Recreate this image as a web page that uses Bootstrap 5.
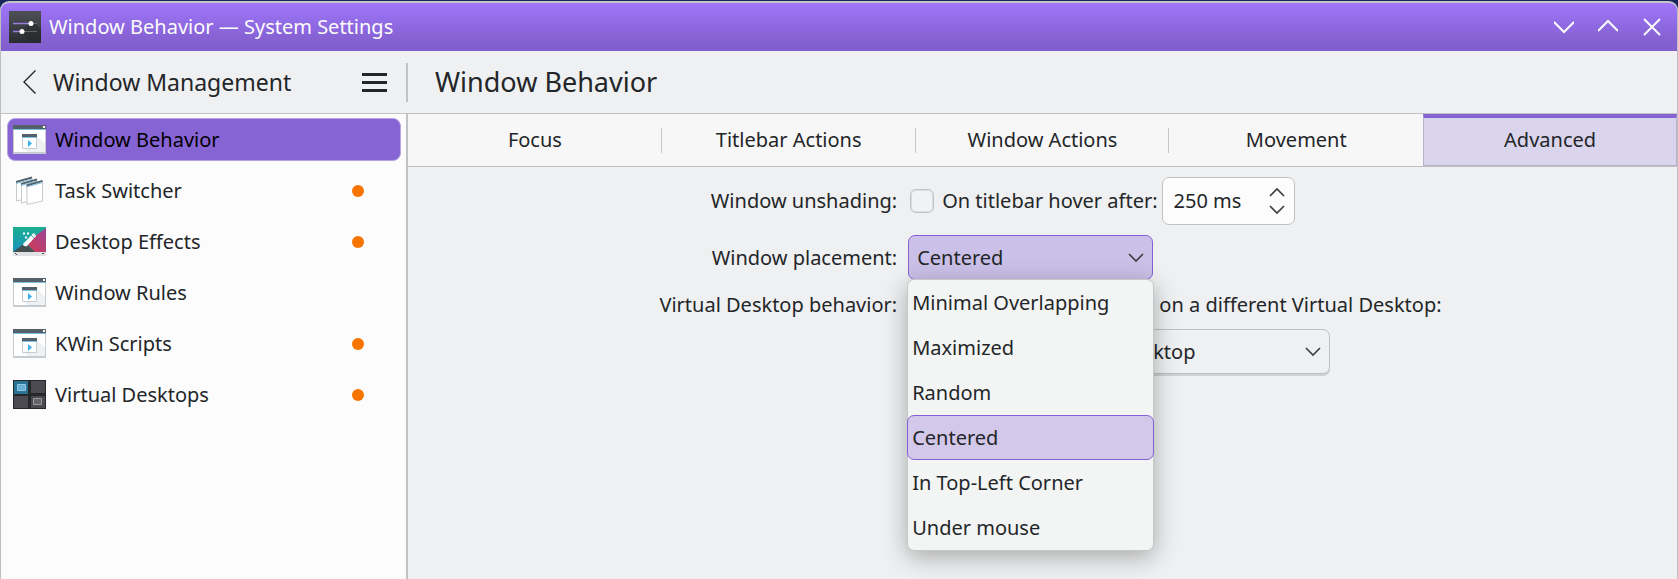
<!DOCTYPE html>
<html lang="en">
<head>
<meta charset="utf-8">
<meta name="viewport" content="width=device-width, initial-scale=1">
<title>Window Behavior — System Settings</title>
<link rel="stylesheet" href="https://cdn.jsdelivr.net/npm/bootstrap@5.3.0/dist/css/bootstrap.min.css">
<style>
  :root { --ink: #232629; --line: #c0c3c5; --accent: #8764d4; --surface: #eff0f1; }
  body { font-family: "Noto Sans", sans-serif; font-size: 20px; line-height: 28px; color: var(--ink); background: #17295c; }
  svg { display: block; flex: none; }
  .app-window { min-height: 100vh; padding-top: 1px; }
  .app-frame { border: 1px solid #bcbec2; border-top: 2px solid #c2c3c6; border-bottom: 0; border-radius: 9px 9px 0 0; background: var(--surface); overflow: hidden; }
  .titlebar { height: 48px; background: linear-gradient(#a076fc, #8561d2 75%, #815ecd); color: #fcfcfc; padding: 0 15px 0 8px; }
  .plain-btn { background: none; border: 0; padding: 0; color: inherit; }
  .toolbar { height: 63px; border-bottom: 1px solid var(--line); }
  .side-width { width: 407px; flex: none; }
  .side-head { padding: 0 20px 0 21px; }
  .side-title { font-size: 23px; line-height: 32px; margin: 0; font-weight: 400; }
  .page-title { font-size: 27px; line-height: 36px; margin: 0; font-weight: 400; padding-left: 27px; }
  .rule { width: 2px; height: 39px; background: var(--line); margin-left: -2px; }
  .sidebar { background: #fcfcfc; border-right: 2px solid var(--line); padding: 4px 5px 0 6px; }
  .side-link { height: 43px; margin-bottom: 8px; padding: 0 37px 0 6px; border-radius: 8px; color: var(--ink); text-decoration: none; display: flex; align-items: center; gap: 9px; }
  .side-link.current { background: var(--accent); color: #000; border: 1px solid #b9a3e6; padding-left: 5px; }
  .dot { width: 12px; height: 12px; border-radius: 50%; background: #f87400; margin-left: auto; }
  .tabs { background: #f7f7f7; border-bottom: 1px solid var(--line); height: 53px; }
  .tab-btn { flex: 1 1 0; background: none; border: solid transparent; border-width: 0 1px; padding: 0; color: var(--ink); position: relative; }
  .tab-btn.split::after { content: ""; position: absolute; right: -1px; top: 14px; height: 25px; width: 1px; background: #c6c8c9; }
  .tab-btn.current { background: #dad4ec; border: 1px solid #b9b0cc; border-top: 4px solid var(--accent); padding-bottom: 3px; }
  .settings-form { display: grid; grid-template-columns: auto auto; justify-content: center; align-items: center; column-gap: 11px; padding: 10px 0 0 16px; }
  .caption { text-align: right; }
  .check { width: 24px; height: 24px; margin: 0 8px 0 2px; appearance: none; border: 1px solid #c0c2c3; box-shadow: inset 0 0 0 1px #dcddde; border-radius: 6px; background: #f1f2f3; }
  .spin { width: 133px; height: 48px; margin-left: 4px; border: 1px solid #bfc1c2; border-radius: 7px; background: #fcfcfc; padding: 0 8px 0 11px; }
  .spin input { width: 80px; border: 0; padding: 0; background: none; color: var(--ink); outline: 0; }
  .combo { height: 45px; border: 1px solid #bfc1c2; border-radius: 7px; padding: 0 36px 0 8px; font-size: 20px; line-height: 28px; color: var(--ink);
    background: #eff0f1 url("data:image/svg+xml,%3Csvg xmlns='http://www.w3.org/2000/svg' width='18' height='10' fill='none' stroke='%233d4043' stroke-width='1.6'%3E%3Cpath d='M2 1l7 7 7-7'/%3E%3C/svg%3E") no-repeat right 7px center / 18px 10px; }
  .combo.open { width: 245px; border-color: #8560d4; background-color: #cbc0e8; }
  .combo.wide { width: 422px; box-shadow: 0 2px 0 #d0d1d2; }
  .row-one { height: 48px; }
  .row-two { height: 45px; margin: 10px 0 11px; }
  .row-three { height: 28px; }
  .row-four { margin-top: 10px; grid-column: 2; }
  .popup { position: absolute; top: 44px; left: -1px; width: 247px; background: #f3f5f4; border: 1px solid #c6c8c8; border-radius: 7px; box-shadow: 0 6px 24px rgba(0,0,0,.3); z-index: 5; }
  .choice { display: block; width: calc(100% + 2px); height: 45px; margin: 0 -1px; padding: 0 4px; border: 1px solid transparent; border-radius: 7px; background: none; color: var(--ink); text-align: left; }
  .choice.current { background: #d3c7ea; border-color: #8560d4; }
</style>
<script src="https://cdn.jsdelivr.net/npm/bootstrap@5.3.0/dist/js/bootstrap.bundle.min.js"></script>
</head>
<body>
<svg width="0" height="0" class="position-absolute" aria-hidden="true">
  <symbol id="win" viewBox="0 0 33 29">
    <path fill="#fff" d="M0 0h33v29H0z"/><path fill="#e4e6e7" d="M24 11l9 9v7H15l-5-4z" opacity=".6"/>
    <path fill="#566069" d="M0 0h33v4H0z"/><path fill="#7cc0e4" d="M0 4h33v1H0z"/><path fill="#fff" d="M30 1h2v2h-2z"/>
    <path fill="#c6cccf" d="M0 5h1v22h31V5h1v24H0z"/>
    <path fill="#fff" stroke="#c5cdd1" d="M9.500 11.500h14v12h-14z"/><path fill="#566069" d="M9 9h15v3H9z"/><path fill="#7cc0e4" d="M9 12h15v1H9z"/>
    <path fill="#3daee9" d="M15 15l4 3.500-4 3.500z"/>
  </symbol>
</svg>
<div class="app-window d-flex flex-column">
 <div class="app-frame d-flex flex-column flex-grow-1">
  <header class="titlebar d-flex align-items-center">
    <svg width="32" height="32"><defs><linearGradient id="dark" x2="0" y2="1"><stop stop-color="#4d5157"/><stop offset="1" stop-color="#292c2f"/></linearGradient></defs>
      <path fill="url(#dark)" d="M0 0h32v32H0z"/><path fill="#24272a" opacity=".5" d="M24 10l8 8v14H23L11 20z"/>
      <path stroke="#62666b" stroke-width="1" d="M22 12.500h6M13 20.500h15"/><path stroke="#9b7ce0" stroke-width="1.500" d="M4 12.500h18M4 20.500h9"/>
      <circle cx="22" cy="12.500" r="2.500" fill="#fff"/><circle cx="13" cy="20.500" r="2.500" fill="#fff"/></svg>
    <span class="ms-2">Window Behavior — System Settings</span>
    <div class="ms-auto d-flex align-items-center gap-4">
      <button class="plain-btn" aria-label="Minimize"><svg width="20" height="20" fill="none" stroke="currentColor" stroke-width="2"><path d="M0 5l10 10L20 5"/></svg></button>
      <button class="plain-btn" aria-label="Maximize"><svg width="20" height="20" fill="none" stroke="currentColor" stroke-width="2"><path d="M0 14L10 4l10 10"/></svg></button>
      <button class="plain-btn" aria-label="Close"><svg width="20" height="20" fill="none" stroke="currentColor" stroke-width="2"><path d="M2 2l16 16M18 2L2 18"/></svg></button>
    </div>
  </header>
  <div class="toolbar d-flex align-items-center">
    <div class="side-width side-head d-flex align-items-center">
      <button class="plain-btn" aria-label="Back"><svg width="15" height="24" fill="none" stroke="currentColor" stroke-width="1.400"><path d="M13.500 0.500L2 12l11.500 11.500"/></svg></button>
      <h2 class="side-title ms-3">Window Management</h2>
      <button class="plain-btn ms-auto" aria-label="Menu"><svg width="26" height="20" stroke="currentColor" stroke-width="3"><path d="M0 2.500h25M0 10.500h25M0 18.500h25"/></svg></button>
    </div>
    <div class="rule"></div>
    <h1 class="page-title">Window Behavior</h1>
  </div>
  <div class="d-flex flex-grow-1">
    <nav class="sidebar side-width">
      <a class="side-link current" href="#"><svg width="33" height="29"><use href="#win"/></svg>Window Behavior</a>
      <a class="side-link" href="#"><svg width="33" height="29">
        <g id="pane"><path fill="#fff" stroke="#c5cbce" d="M3.500 5.500L19 1.500v20L3.500 25z"/><path fill="#566069" d="M3 5l16-4.500v2L3 7z"/><path fill="#7cc0e4" d="M3 7l16-4.500v1L3 8z"/></g>
        <use href="#pane" x="5" y="2"/><use href="#pane" x="10.500" y="3.500"/></svg>Task Switcher<span class="dot"></span></a>
      <a class="side-link" href="#"><svg width="33" height="29"><defs><linearGradient id="sea" x2="0" y2="1"><stop stop-color="#1aaf90"/><stop offset="1" stop-color="#1d8fc0"/></linearGradient><linearGradient id="rose" x1="0" y1="1" x2="1" y2="0"><stop stop-color="#d8394e"/><stop offset="1" stop-color="#9a4598"/></linearGradient></defs>
        <path fill="url(#sea)" d="M0 0h33v26H0z"/><path fill="url(#rose)" d="M33 1v24H22l-9-9z"/><path fill="#44504f" d="M0 25l12-9 10 9z"/><path fill="#dfe1e2" d="M0 25h33v4H0z"/><path stroke="#44504f" d="M2 26l2 2M29 26.500h2"/>
        <path fill="#fff" d="M10 17L20 6.500l3 2.500-9 10q-4 1-4-2z"/><path stroke="#55a9a1" d="M18 8l3 3"/><path fill="#d5e8e8" d="M19 7l2-1 2 2-1 3z"/><path stroke="#fff" stroke-width="2" d="M10 6.500h2M14 6.500h2M12 10.500h2"/></svg>Desktop Effects<span class="dot"></span></a>
      <a class="side-link" href="#"><svg width="33" height="29"><use href="#win"/></svg>Window Rules</a>
      <a class="side-link" href="#"><svg width="33" height="29"><use href="#win"/></svg>KWin Scripts<span class="dot"></span></a>
      <a class="side-link" href="#"><svg width="33" height="29"><path fill="#24282b" d="M0 0h33v29H0z"/><path fill="#2c7293" d="M1 1h14v13H1z"/><path fill="#4a4a50" d="M18 1h14v12H18zM1 16h14v12H1zM18 16h14v12H18z"/><path fill="#6ab0d6" stroke="#92c7e2" d="M4.500 4.500h8v6h-8z"/><path fill="#656569" stroke="#9a9a9d" d="M20.500 18.500h8v6h-8z"/></svg>Virtual Desktops<span class="dot"></span></a>
    </nav>
    <main class="flex-grow-1">
      <div class="tabs d-flex" role="tablist">
        <button class="tab-btn split" role="tab">Focus</button>
        <button class="tab-btn split" role="tab">Titlebar Actions</button>
        <button class="tab-btn split" role="tab">Window Actions</button>
        <button class="tab-btn" role="tab">Movement</button>
        <button class="tab-btn current" role="tab" aria-selected="true">Advanced</button>
      </div>
      <form class="settings-form">
        <label class="caption" for="hover">Window unshading:</label>
        <div class="row-one d-flex align-items-center">
          <input class="check" type="checkbox" id="hover"><label for="delay">On titlebar hover after:</label>
          <div class="spin d-flex align-items-center justify-content-between">
            <input type="text" role="spinbutton" id="delay" value="250 ms" aria-valuenow="250">
            <div class="d-flex flex-column gap-2">
              <button type="button" class="plain-btn" aria-label="Increase"><svg width="18" height="10" fill="none" stroke="#3d4043" stroke-width="1.700"><path d="M2 9l7-7 7 7"/></svg></button>
              <button type="button" class="plain-btn" aria-label="Decrease"><svg width="18" height="10" fill="none" stroke="#3d4043" stroke-width="1.700"><path d="M2 1l7 7 7-7"/></svg></button>
            </div>
          </div>
        </div>
        <label class="caption" for="placement">Window placement:</label>
        <div class="row-two position-relative">
          <select class="form-select combo open" id="placement"><option>Centered</option></select>
          <div class="popup" role="listbox" aria-label="Window placement">
            <button type="button" class="choice" role="option">Minimal Overlapping</button>
            <button type="button" class="choice" role="option">Maximized</button>
            <button type="button" class="choice" role="option">Random</button>
            <button type="button" class="choice current" role="option" aria-selected="true">Centered</button>
            <button type="button" class="choice" role="option">In Top-Left Corner</button>
            <button type="button" class="choice" role="option">Under mouse</button>
          </div>
        </div>
        <div class="caption">Virtual Desktop behavior:</div>
        <label class="row-three" for="activate">When activating a window on a different Virtual Desktop:</label>
        <div class="row-four"><select class="form-select combo wide" id="activate"><option>Switch to that Virtual Desktop</option></select></div>
      </form>
    </main>
  </div>
 </div>
</div>
</body>
</html>
